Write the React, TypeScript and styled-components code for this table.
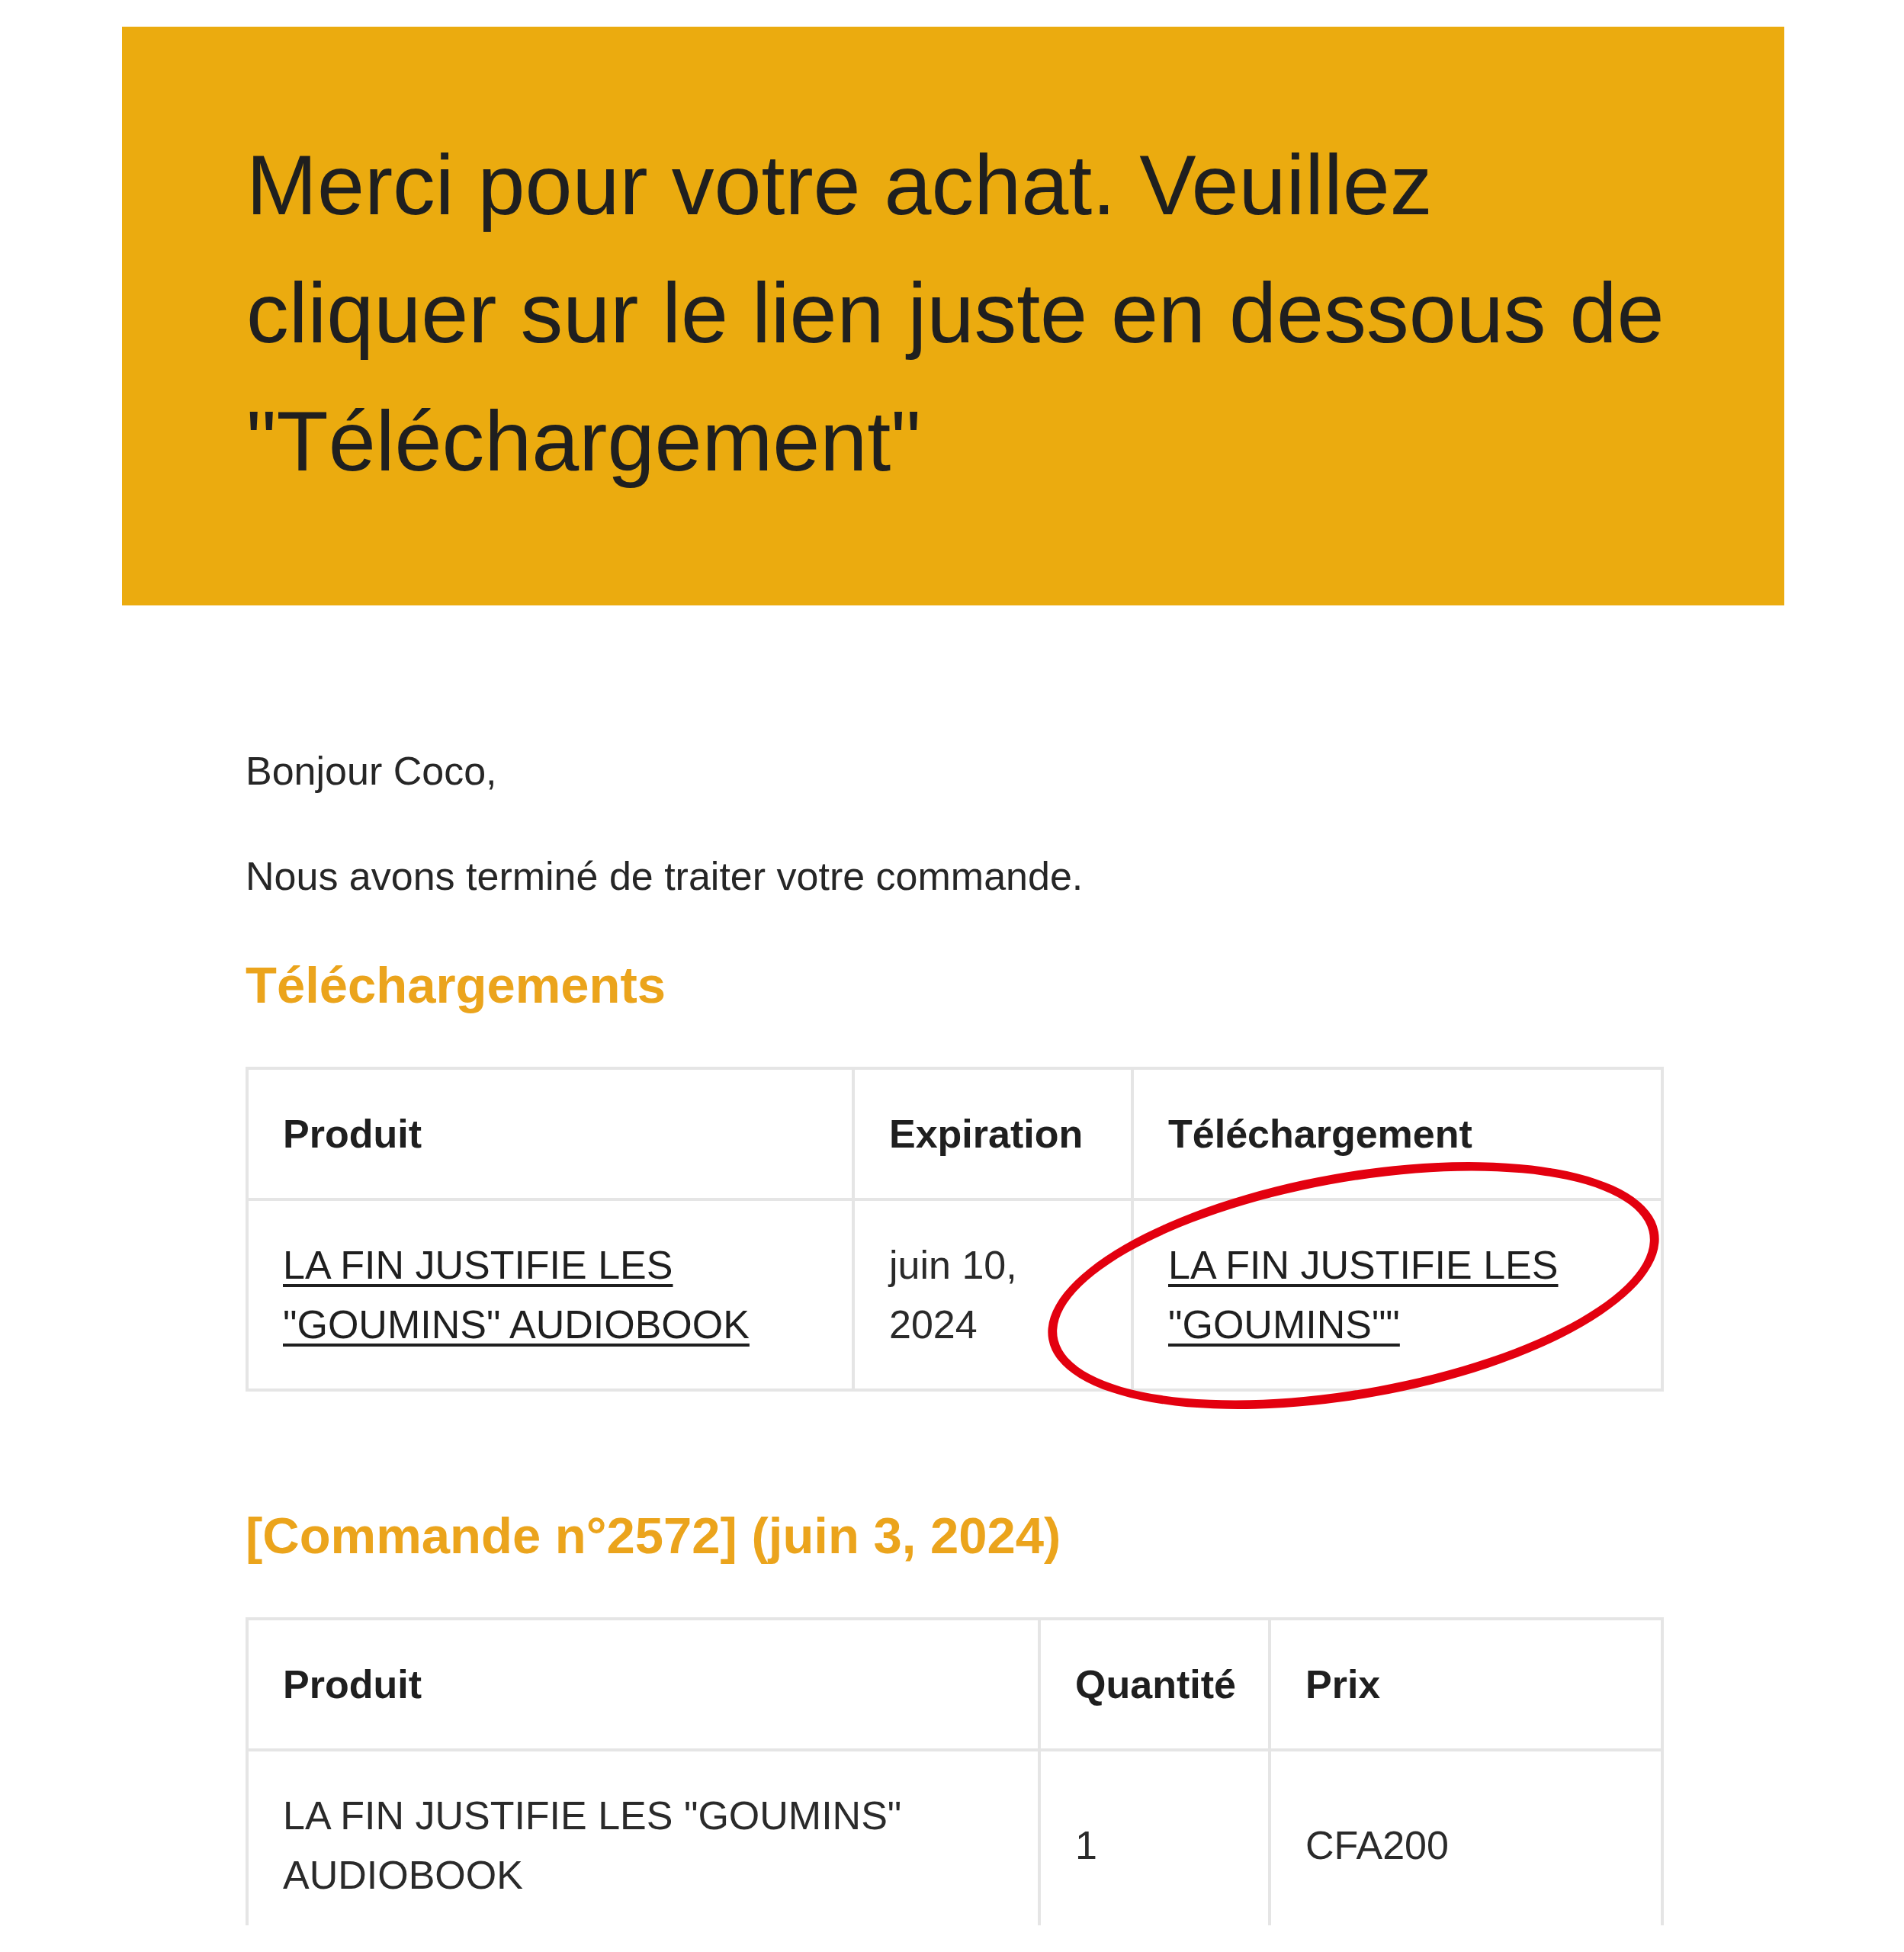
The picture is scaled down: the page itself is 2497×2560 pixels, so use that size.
import React from 'react';
import styled, { createGlobalStyle } from 'styled-components';

const GlobalStyle = createGlobalStyle`
  html, body {
    margin: 0;
    padding: 0;
    background: #ffffff;
  }
  body {
    font-family: "Liberation Sans", Arial, Helvetica, sans-serif;
    color: #262626;
  }
`;

const Page = styled.div`
  height: 2525px;
  overflow: hidden;
  padding: 35px 0 0 160px;
  box-sizing: border-box;
`;

const EmailWrapper = styled.div`
  width: 2180px;
`;

const Header = styled.div`
  background-color: #ebab0f;
  padding: 124px 130px 131px 163px;
`;

const HeaderTitle = styled.h1`
  margin: 0;
  font-size: 111.5px;
  line-height: 168px;
  font-weight: 400;
  color: #1f1f1f;
`;

const Body = styled.div`
  padding: 178px 158px 0 162px;
`;

const Paragraph = styled.p`
  margin: 0 0 60px;
  font-size: 52px;
  line-height: 78px;
  color: #262626;
`;

const SectionTitle = styled.h2`
  margin: 0 0 64px;
  font-size: 67px;
  line-height: 87px;
  font-weight: 700;
  color: #eba41c;
`;

const TableBlock = styled.div`
  position: relative;
  margin-bottom: 145px;
`;

const Table = styled.table`
  width: 1856px;
  border-collapse: collapse;
  table-layout: fixed;
  border: 4px solid #e5e5e5;
`;

const HeadCell = styled.th`
  border: 4px solid #e5e5e5;
  padding: 45px;
  text-align: left;
  vertical-align: middle;
  font-size: 52px;
  line-height: 78px;
  font-weight: 700;
  color: #1f1f1f;
`;

const Cell = styled.td`
  border: 4px solid #e5e5e5;
  padding: 45px;
  text-align: left;
  vertical-align: middle;
  font-size: 52px;
  line-height: 78px;
  color: #2a2a2a;
`;

const ProductLink = styled.a`
  color: #1f1f1f;
  text-decoration: underline;
  text-decoration-thickness: 4px;
  text-underline-offset: 7px;
`;

const Annotation = styled.svg`
  position: absolute;
  left: 1003px;
  top: 87px;
  width: 900px;
  height: 400px;
  pointer-events: none;
  overflow: visible;
`;

// hand-drawn red ring around the download link
const RedCircle = () => (
  <Annotation viewBox="0 0 900 400">
    <g transform="rotate(-10 450 200)">
      <path
        fill="#e3000f"
        fillRule="evenodd"
        d="M 44 200 A 406 148 0 1 0 856 200 A 406 148 0 1 0 44 200 Z
           M 56 203 A 394 136 0 1 1 844 197 A 394 136 0 1 1 56 203 Z"
      />
    </g>
  </Annotation>
);

export default function App() {
  return (
    <>
      <GlobalStyle />
      <Page>
        <EmailWrapper>
          <Header>
            <HeaderTitle>
              Merci pour votre achat. Veuillez cliquer sur le lien juste en dessous de "Téléchargement"
            </HeaderTitle>
          </Header>
          <Body>
            <Paragraph>Bonjour Coco,</Paragraph>
            <Paragraph>Nous avons terminé de traiter votre commande.</Paragraph>

            <SectionTitle>Téléchargements</SectionTitle>
            <TableBlock>
              <Table>
                <colgroup>
                  <col style={{ width: 795 }} />
                  <col style={{ width: 366 }} />
                  <col style={{ width: 695 }} />
                </colgroup>
                <thead>
                  <tr>
                    <HeadCell>Produit</HeadCell>
                    <HeadCell>Expiration</HeadCell>
                    <HeadCell>Téléchargement</HeadCell>
                  </tr>
                </thead>
                <tbody>
                  <tr>
                    <Cell>
                      <ProductLink href="#">LA FIN JUSTIFIE LES "GOUMINS" AUDIOBOOK</ProductLink>
                    </Cell>
                    <Cell>juin 10, 2024</Cell>
                    <Cell>
                      <ProductLink href="#">LA FIN JUSTIFIE LES "GOUMINS""</ProductLink>
                    </Cell>
                  </tr>
                </tbody>
              </Table>
              <RedCircle />
            </TableBlock>

            <SectionTitle>[Commande n°2572] (juin 3, 2024)</SectionTitle>
            <TableBlock>
              <Table>
                <colgroup>
                  <col style={{ width: 1039 }} />
                  <col style={{ width: 302 }} />
                  <col style={{ width: 515 }} />
                </colgroup>
                <thead>
                  <tr>
                    <HeadCell>Produit</HeadCell>
                    <HeadCell>Quantité</HeadCell>
                    <HeadCell>Prix</HeadCell>
                  </tr>
                </thead>
                <tbody>
                  <tr>
                    <Cell>LA FIN JUSTIFIE LES "GOUMINS" AUDIOBOOK</Cell>
                    <Cell>1</Cell>
                    <Cell>CFA200</Cell>
                  </tr>
                </tbody>
              </Table>
            </TableBlock>
          </Body>
        </EmailWrapper>
      </Page>
    </>
  );
}
